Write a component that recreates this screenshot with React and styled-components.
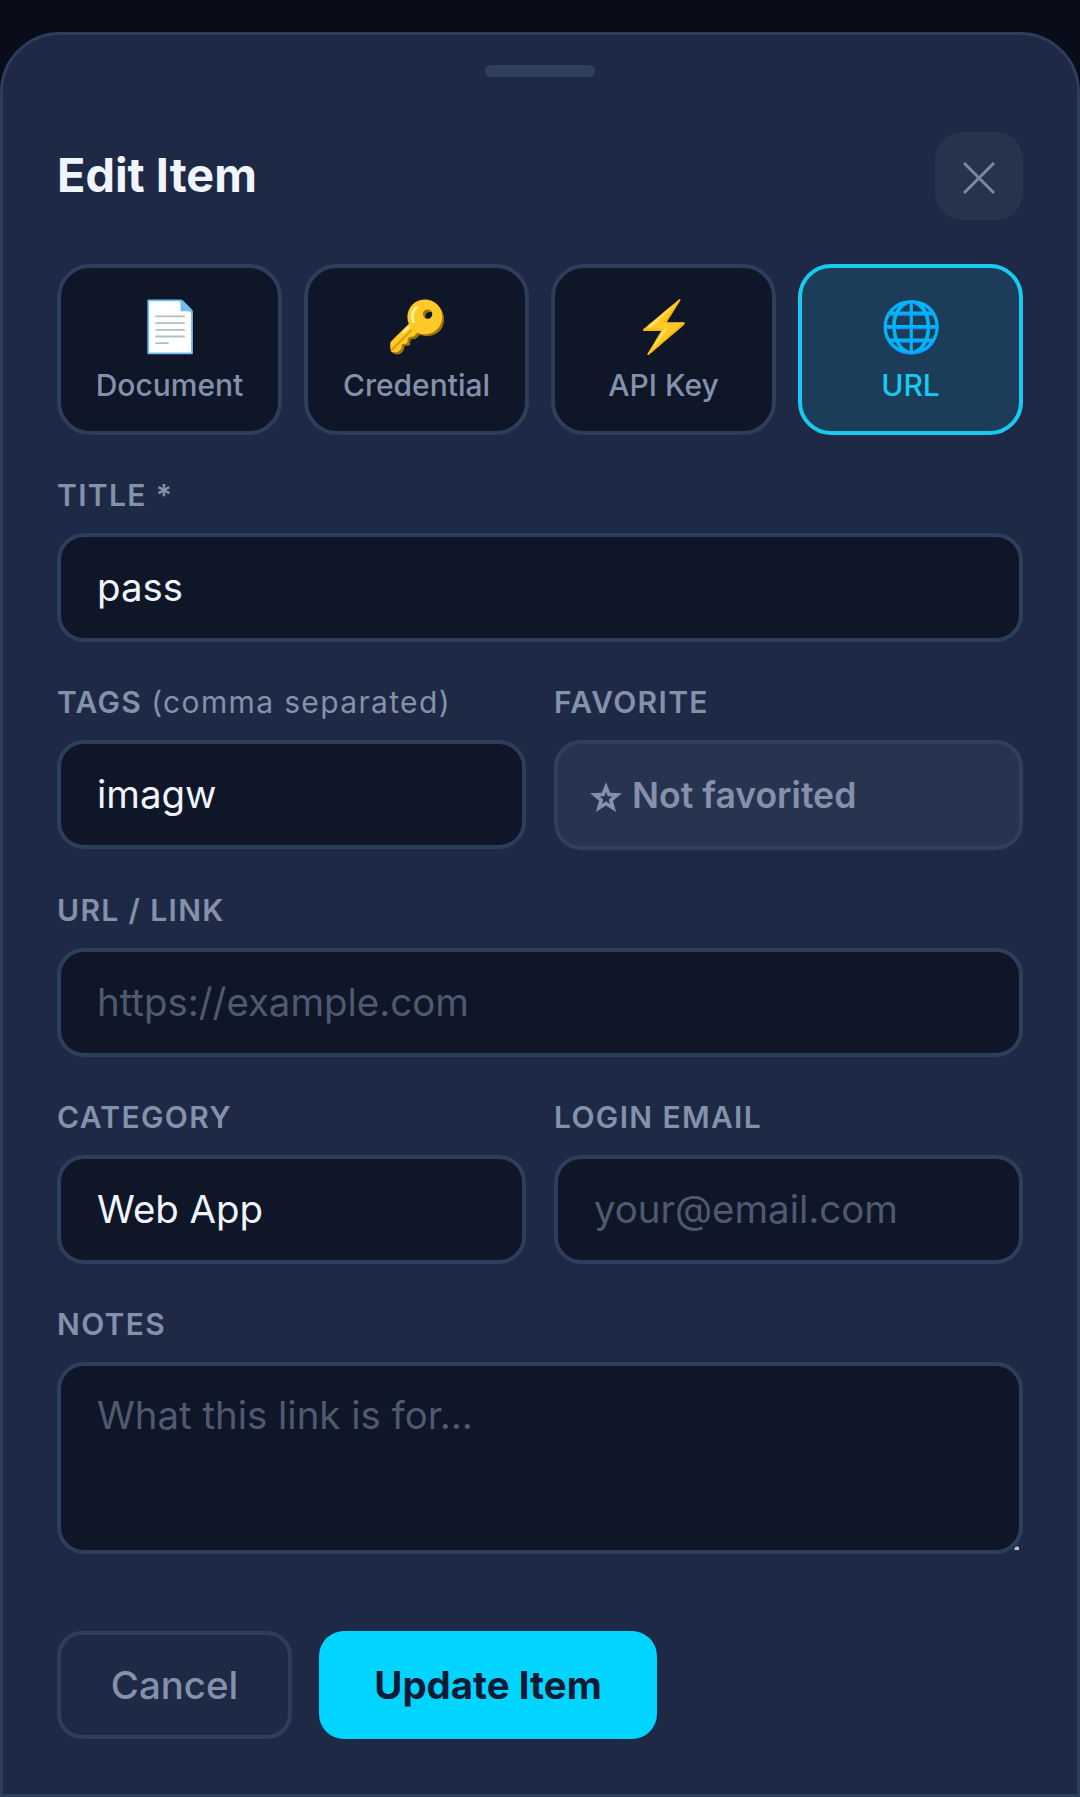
import styled, { createGlobalStyle } from 'styled-components'

const types = [
  { icon: '📄', label: 'Document' },
  { icon: '🔑', label: 'Credential' },
  { icon: '⚡', label: 'API Key' },
  { icon: '🌐', label: 'URL', active: true },
]

function App() {
  return (
    <>
      <GlobalStyle />
      <Sheet>
        <Handle />
        <Header>
          <Title>Edit Item</Title>
          <CloseButton type="button" aria-label="Close">
            <svg width="32" height="32" viewBox="0 0 32 32" fill="none" stroke="currentColor" strokeWidth="3">
              <path d="M1 1 L31 31 M31 1 L1 31" />
            </svg>
          </CloseButton>
        </Header>

        <TypeGrid>
          {types.map((t) => (
            <TypeCard key={t.label} type="button" $active={t.active}>
              <Emoji>{t.icon}</Emoji>
              <span>{t.label}</span>
            </TypeCard>
          ))}
        </TypeGrid>

        <Field>
          <Label>Title *</Label>
          <Input defaultValue="pass" />
        </Field>

        <Row>
          <Field>
            <Label>
              Tags <Hint>(comma separated)</Hint>
            </Label>
            <Input defaultValue="imagw" />
          </Field>
          <Field>
            <Label>Favorite</Label>
            <FavoriteButton type="button">
              <Star width="34" height="32" viewBox="0 0 32 30" fill="currentColor" fillRule="evenodd">
                <path d="M16 1 L20 11 L31 11.5 L22.5 18.5 L25.5 29 L16 23 L6.5 29 L9.5 18.5 L1 11.5 L12 11 Z M16 10.3 L14.4 14.3 L10 14.5 L13.4 17.3 L12.2 21.5 L16 19.1 L19.8 21.5 L18.6 17.3 L22 14.5 L17.6 14.3 Z" />
              </Star>
              Not favorited
            </FavoriteButton>
          </Field>
        </Row>

        <Field>
          <Label>URL / Link</Label>
          <Input placeholder="https://example.com" />
        </Field>

        <Row>
          <Field>
            <Label>Category</Label>
            <Input defaultValue="Web App" />
          </Field>
          <Field>
            <Label>Login Email</Label>
            <Input placeholder="your@email.com" />
          </Field>
        </Row>

        <Field>
          <Label>Notes</Label>
          <Notes placeholder="What this link is for..." />
        </Field>

        <Actions>
          <CancelButton type="button">Cancel</CancelButton>
          <SubmitButton type="button">Update Item</SubmitButton>
        </Actions>
      </Sheet>
    </>
  )
}

export default App

const GlobalStyle = createGlobalStyle`
  * {
    box-sizing: border-box;
  }
  html, body {
    margin: 0;
    background: #080c18;
  }
  body {
    font-family: Inter, "Liberation Sans", sans-serif;
    height: 1797px;
    overflow: hidden;
    padding-top: 32px;
  }
  button, input, textarea {
    font-family: inherit;
  }
`

const Sheet = styled.div`
  height: 1765px;
  padding: 30px 54px 0;
  background: #1e2a45;
  border: 3px solid #2d3d5c;
  border-radius: 60px 60px 0 0;
`

const Handle = styled.div`
  width: 110px;
  height: 12px;
  margin: 0 auto 55px;
  background: #2f3f5f;
  border-radius: 6px;
`

const Header = styled.div`
  display: flex;
  align-items: center;
  justify-content: space-between;
  margin-bottom: 44px;
`

const Title = styled.h2`
  margin: 0 0 2px;
  font-size: 46.8px;
  font-weight: 700;
  color: #f0f4ff;
`

const CloseButton = styled.button`
  width: 88px;
  height: 88px;
  display: flex;
  align-items: center;
  justify-content: center;
  padding: 4px 0 0;
  background: #27324c;
  border: none;
  border-radius: 27px;
  color: #7d879f;
`

const TypeGrid = styled.div`
  display: grid;
  grid-template-columns: repeat(4, 1fr);
  gap: 22px;
  margin-bottom: 42px;
`

const TypeCard = styled.button`
  height: 171px;
  display: flex;
  flex-direction: column;
  align-items: center;
  justify-content: center;
  gap: 11px;
  padding: 0;
  background: ${(p) => (p.$active ? '#1b3d5a' : '#0f1628')};
  border: 4px solid ${(p) => (p.$active ? '#19c9f0' : '#2d3d5c')};
  border-radius: 33px;
  color: ${(p) => (p.$active ? '#19c9f0' : '#8491ab')};
  font-size: 30px;
  font-weight: 500;
`

const Emoji = styled.span`
  font-size: 50px;
  line-height: 60px;
`

const Field = styled.div`
  min-width: 0;
  margin-bottom: 42px;
`

const Row = styled.div`
  display: grid;
  grid-template-columns: 1fr 1fr;
  gap: 28px;
`

const Label = styled.label`
  display: block;
  margin-bottom: 20px;
  font-size: 30px;
  line-height: 36px;
  font-weight: 600;
  letter-spacing: 1.35px;
  text-transform: uppercase;
  color: #8491ab;
`

const Hint = styled.span`
  font-weight: 400;
  text-transform: none;
`

const Input = styled.input`
  display: block;
  width: 100%;
  height: 109px;
  padding: 0 36px 2px;
  background: #0f1628;
  border: 4px solid #2d3d5c;
  border-radius: 27px;
  color: #f0f4ff;
  font-size: 38.4px;
  outline: none;

  &::placeholder {
    color: #4f5a70;
  }
`

const Notes = styled.textarea`
  display: block;
  width: 100%;
  height: 192px;
  padding: 26px 36px;
  background: #0f1628;
  border: 4px solid #2d3d5c;
  border-radius: 27px;
  color: #f0f4ff;
  font-size: 38.4px;
  outline: none;

  &::placeholder {
    color: #4f5a70;
  }

  &::-webkit-resizer {
    background: radial-gradient(circle at 13px 14px, #b8c2d8 2px, transparent 3px);
  }
`

const FavoriteButton = styled.button`
  display: flex;
  align-items: center;
  gap: 9px;
  width: 100%;
  height: 110px;
  padding: 0 33px;
  background: #273450;
  border: 4px solid #303f5c;
  border-radius: 27px;
  color: #8491ab;
  font-size: 35.6px;
  font-weight: 600;
`

const Star = styled.svg`
  flex: none;
  margin: 3px 0 0 -2px;
`

const Actions = styled.div`
  display: flex;
  gap: 27px;
  margin-top: 77px;
`

const CancelButton = styled.button`
  width: 235px;
  height: 108px;
  background: transparent;
  border: 4px solid #2d3d5c;
  border-radius: 25px;
  color: #8491ab;
  font-size: 38.4px;
  font-weight: 500;
`

const SubmitButton = styled.button`
  width: 338px;
  height: 108px;
  background: #00d4ff;
  border: none;
  border-radius: 25px;
  color: #0f1a35;
  font-size: 38.4px;
  font-weight: 700;
`
